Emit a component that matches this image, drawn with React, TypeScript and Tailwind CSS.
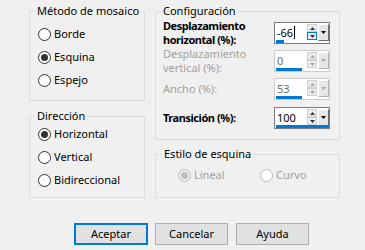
import React from "react";

function Radio({
  label,
  checked = false,
  disabled = false,
  whiteBg = false,
  className = "",
}: {
  label: string;
  checked?: boolean;
  disabled?: boolean;
  whiteBg?: boolean;
  className?: string;
}) {
  const circle = disabled
    ? whiteBg
      ? "border-[#bcbcbc] bg-white"
      : "border-[#bcbcbc] bg-[#f0f0f0]"
    : "border-[#333333] bg-white";
  return (
    <div className={`flex items-center h-[23px] ${className}`}>
      <span
        className={`w-[13px] h-[13px] rounded-full border flex items-center justify-center shrink-0 ${circle}`}
      >
        {checked && (
          <span
            className={`w-[7px] h-[7px] rounded-full ${disabled ? "bg-[#bcbcbc]" : "bg-[#333333]"}`}
          />
        )}
      </span>
      <span className={`ml-[3px] ${disabled ? "text-[#a0a0a0]" : "text-black"}`}>{label}</span>
    </div>
  );
}

function Arrow({ dir, color }: { dir: "up" | "down"; color: string }) {
  return (
    <svg width="5" height="3" viewBox="0 0 5 3">
      {dir === "up" ? (
        <polygon points="2.5,0 5,3 0,3" fill={color} />
      ) : (
        <polygon points="0,0 5,0 2.5,3" fill={color} />
      )}
    </svg>
  );
}

function Spin({
  value,
  disabled = false,
  barClass,
  hoverDown = false,
  caret = false,
}: {
  value: string;
  disabled?: boolean;
  barClass: string;
  hoverDown?: boolean;
  caret?: boolean;
}) {
  const arrowColor = disabled ? "#a8a8a8" : "#000000";
  return (
    <div
      className={`w-[56px] h-[22px] border bg-white flex flex-col ${disabled ? "border-[#cccccc]" : "border-[#7a7a7a]"}`}
    >
      <div className="flex h-[17px]">
        <div
          className={`w-[32px] pl-[2px] pt-[1px] flex items-center ${disabled ? "text-[#6d6d6d]" : "text-black"}`}
        >
          <span className="leading-[17px]">{value}</span>
          {caret && <span className="w-[1px] h-[13px] bg-black ml-[1px]" />}
        </div>
        <div className="w-[10px] mr-[1px] mt-[1px] flex flex-col">
          <div className="h-[8px] border border-[#cfcfcf] bg-[#ececec] flex items-center justify-center">
            <Arrow dir="up" color={disabled ? "#a8a8a8" : "#333333"} />
          </div>
          <div
            className={`h-[8px] border flex items-center justify-center ${hoverDown ? "border-[#0078d7] bg-[#e5f1fb]" : "border-[#cfcfcf] bg-[#ececec]"}`}
          >
            <Arrow dir="down" color={disabled ? "#a8a8a8" : "#333333"} />
          </div>
        </div>
        <div
          className={`w-[11px] mt-[1px] h-[17px] border-t border-l border-r border-b flex items-center justify-center bg-[#e6e6e6] ${disabled ? "border-t-white border-l-white border-r-[#b4b4b4] border-b-[#b4b4b4]" : "border-t-white border-l-white border-r-[#696969] border-b-[#696969]"}`}
        >
          <Arrow dir="down" color={arrowColor} />
        </div>
      </div>
      <div className="h-[3px] pl-[1px]">
        <div className={`h-full bg-[#0078d7] ${barClass}`} />
      </div>
    </div>
  );
}

function Row({
  children,
  spin,
  className = "",
}: {
  children: React.ReactNode;
  spin: React.ReactNode;
  className?: string;
}) {
  return (
    <div className={`flex items-center h-[22px] ${className}`}>
      <div className="w-[111px] leading-[14px]">{children}</div>
      {spin}
    </div>
  );
}

export default function App() {
  return (
    <div className="w-[365px] h-[250px] bg-[#f0f0f0] text-[11px] text-black font-['Noto_Sans',sans-serif] overflow-hidden">
      <div className="flex pt-[4px] pl-[29px]">
        <div className="w-[116px] flex flex-col">
          <fieldset className="border border-[#dcdcdc] h-[97px] pl-[8px] pt-[5px] min-w-0">
            <legend className="px-[2px] -ml-[3px] leading-[14px]">Método de mosaico</legend>
            <Radio label="Borde" />
            <Radio label="Esquina" checked />
            <Radio label="Espejo" />
          </fieldset>
          <fieldset className="border border-[#dcdcdc] h-[89px] mt-[8px] pl-[8px] min-w-0">
            <legend className="px-[2px] -ml-[3px] leading-[14px]">Dirección</legend>
            <Radio label="Horizontal" checked />
            <Radio label="Vertical" />
            <Radio label="Bidireccional" />
          </fieldset>
        </div>
        <div className="w-[185px] ml-[10px] flex flex-col">
          <fieldset className="border border-[#dcdcdc] h-[136px] pl-[7px] pt-[4px] min-w-0">
            <legend className="px-[2px] -ml-[2px] leading-[14px]">Configuración</legend>
            <Row spin={<Spin value="-66" barClass="w-[8px]" hoverDown caret />}>
              <div className="font-bold tracking-[-0.45px]">Desplazamiento</div>
              <div className="font-bold tracking-[-0.45px]">horizontal (%):</div>
            </Row>
            <Row className="mt-[6px]" spin={<Spin value="0" disabled barClass="w-[26px]" />}>
              <div className="text-[#a0a0a0]">Desplazamiento</div>
              <div className="text-[#a0a0a0]">vertical (%):</div>
            </Row>
            <Row className="mt-[6px]" spin={<Spin value="53" disabled barClass="w-[26px]" />}>
              <div className="text-[#a0a0a0]">Ancho (%):</div>
            </Row>
            <Row className="mt-[7px]" spin={<Spin value="100" barClass="w-[53px]" />}>
              <div className="font-bold tracking-[-0.45px]">Transición (%):</div>
            </Row>
          </fieldset>
          <fieldset className="border border-[#dcdcdc] h-[51px] mt-[7px] pl-[22px] pt-[3px] min-w-0">
            <legend className="px-[2px] -ml-[16px] leading-[14px]">Estilo de esquina</legend>
            <div className="flex">
              <Radio label="Lineal" checked disabled className="w-[82px]" />
              <Radio label="Curvo" disabled whiteBg />
            </div>
          </fieldset>
        </div>
      </div>
      <div className="flex pl-[74px] mt-[25px]">
        <button className="w-[74px] h-[22px] border-2 border-[#0078d7] bg-[#e1e1e1] flex items-center justify-center">
          Aceptar
        </button>
        <button className="w-[73px] h-[22px] ml-[7px] border border-[#adadad] bg-[#e1e1e1] flex items-center justify-center">
          Cancelar
        </button>
        <button className="w-[73px] h-[22px] ml-[8px] border border-[#adadad] bg-[#e1e1e1] flex items-center justify-center">
          Ayuda
        </button>
      </div>
    </div>
  );
}
